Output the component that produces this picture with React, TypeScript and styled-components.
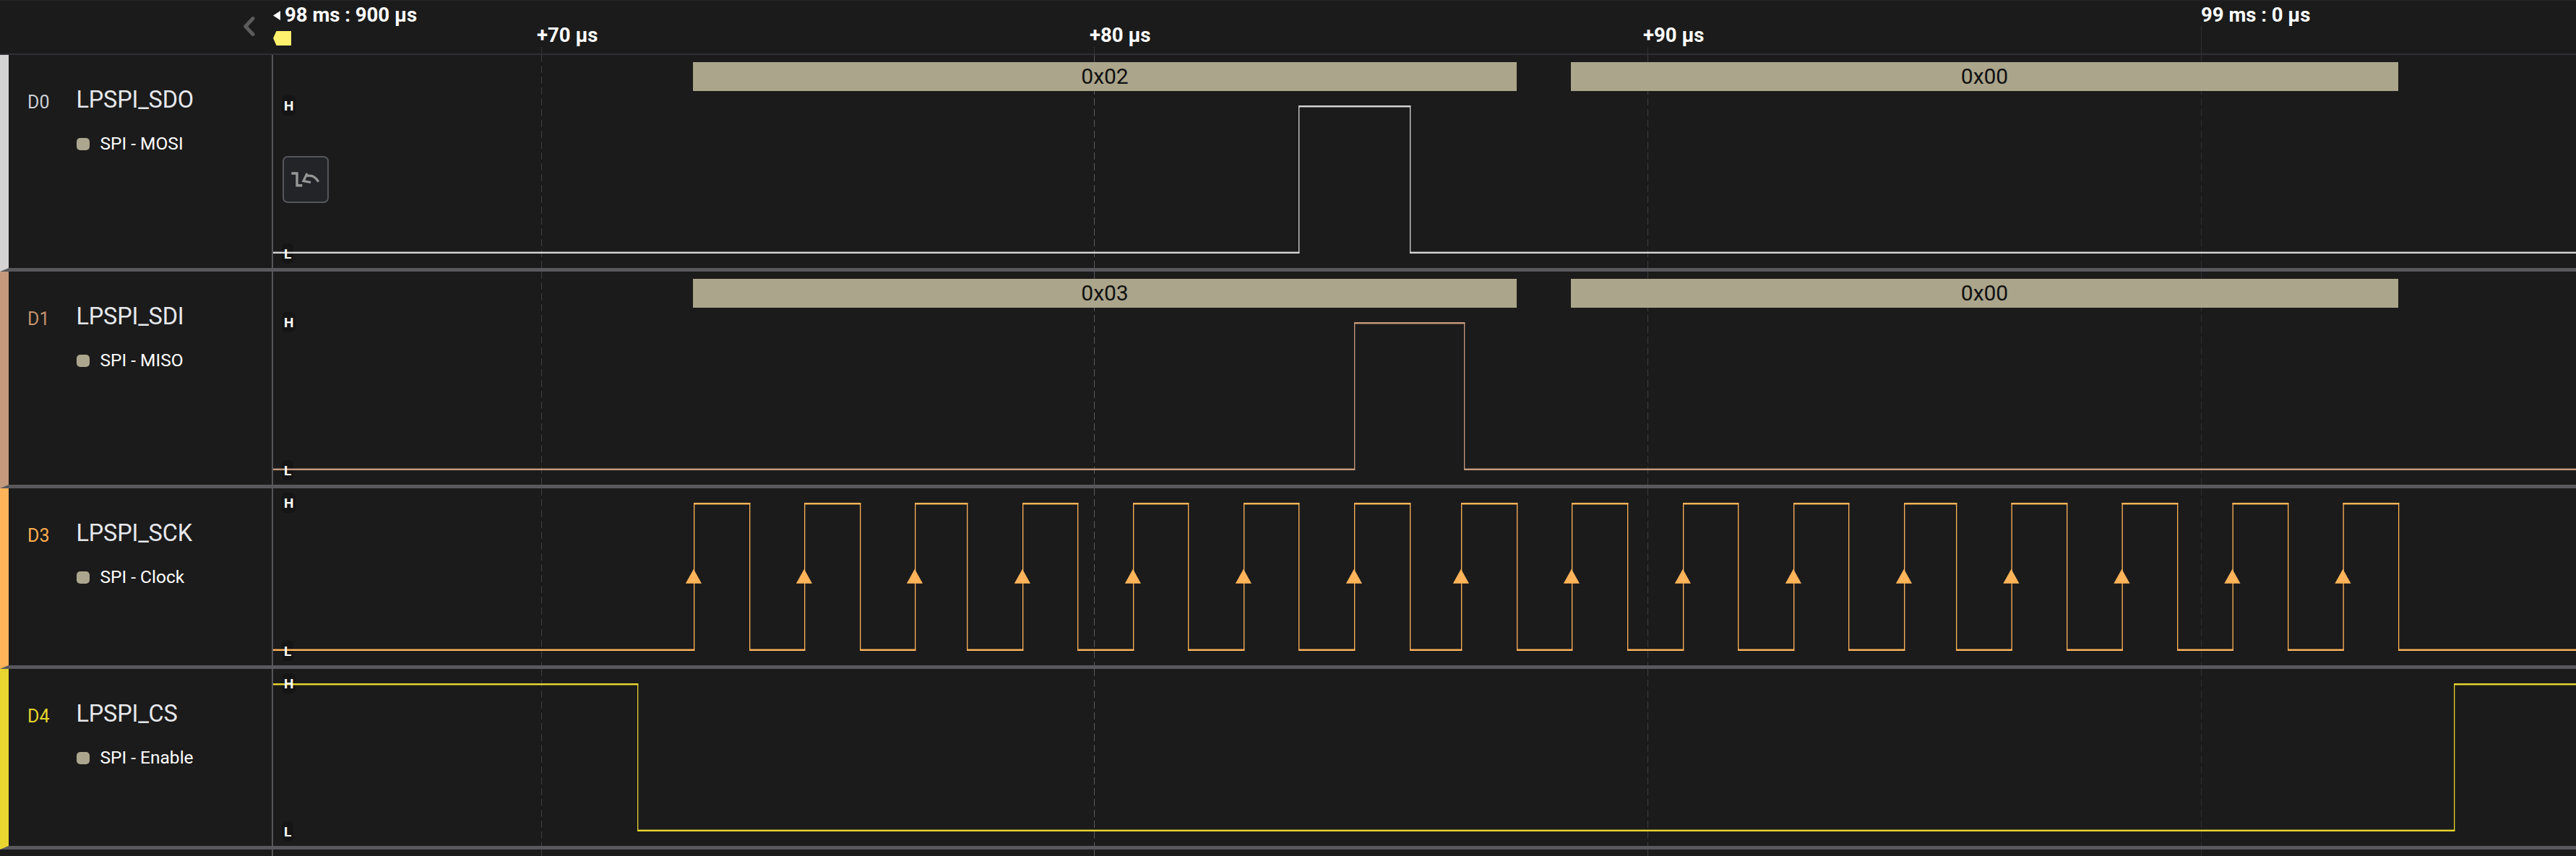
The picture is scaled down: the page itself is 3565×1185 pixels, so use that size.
import styled, { createGlobalStyle } from 'styled-components';

const GlobalStyle = createGlobalStyle`
  html, body {
    margin: 0;
    padding: 0;
    background: #1b1b1b;
    font-family: 'Roboto', 'Liberation Sans', sans-serif;
  }
`;

const Page = styled.div`
  display: flex;
  flex-direction: column;
  width: 3565px;
  height: 1185px;
  overflow: hidden;
  background: #1b1b1b;
`;

const Header = styled.header`
  display: flex;
  flex: 0 0 76px;
  box-sizing: border-box;
  border-top: 1px solid #252527;
  border-bottom: 2px solid #2f2f34;
`;

const HeaderSide = styled.div`
  display: flex;
  flex: 0 0 378px;
  justify-content: flex-end;
  align-items: flex-start;
  padding: 22px 25px 0 0;
  box-sizing: border-box;
`;

const Ruler = styled.div`
  position: relative;
  flex: 1;
`;

const RulerLabel = styled.span<{ $row: number }>`
  position: absolute;
  top: ${p => (p.$row === 0 ? 4 : 32)}px;
  color: #fff;
  font-size: 27.5px;
  font-weight: 700;
  line-height: 32px;
  white-space: nowrap;
`;

const RulerTick = styled.i<{ $row: number }>`
  position: absolute;
  top: ${p => (p.$row === 0 ? 35 : 64)}px;
  bottom: 0;
  width: 1px;
  background: #303034;
`;

const Marker = styled.svg`
  position: absolute;
  top: 0;
  left: 0;
`;

const Channel = styled.section<{ $height: number; $color: string }>`
  display: flex;
  flex: 0 0 ${p => p.$height}px;
  box-sizing: border-box;
  border-left: 12px solid ${p => p.$color};
  border-bottom: 5px solid #58585d;
`;

const ChannelInfo = styled.div`
  display: flex;
  flex: 0 0 366px;
  box-sizing: border-box;
  padding: 43px 0 0 26px;
  border-right: 2px solid #55565a;
`;

const ChannelTag = styled.span<{ $color: string }>`
  flex: 0 0 67.5px;
  margin-top: 8px;
  color: ${p => p.$color};
  font-size: 25px;
  font-weight: 400;
  line-height: 30px;
`;

const ChannelText = styled.div`
  display: flex;
  flex-direction: column;
  gap: 27px;
`;

const ChannelName = styled.span`
  color: #e6e8ec;
  font-size: 32.5px;
  font-weight: 400;
  line-height: 38px;
  letter-spacing: -0.2px;
`;

const Analyzer = styled.div`
  display: flex;
  align-items: center;
  gap: 15px;
  color: #fff;
  font-size: 24.5px;
  line-height: 30px;
`;

const AnalyzerDot = styled.i`
  width: 18px;
  height: 17px;
  border-radius: 5px;
  background: #aca68e;
`;

const Wave = styled.div`
  position: relative;
  flex: 1;
  isolation: isolate;
`;

const WaveDrawing = styled.svg`
  position: absolute;
  top: 0;
  left: 0;
  z-index: 1;
`;

const LevelLabel = styled.span<{ $top: number }>`
  position: absolute;
  top: ${p => p.$top}px;
  left: 12px;
  height: 28px;
  padding: 0 3px;
  color: #fff;
  font-size: 19px;
  font-weight: 700;
  line-height: 30px;

  &::before {
    content: '';
    position: absolute;
    inset: 0;
    z-index: 0;
    border-radius: 6px;
    background: #151516;
  }

  b {
    position: relative;
    z-index: 2;
    font-weight: inherit;
  }
`;

const DataFrame = styled.div`
  position: absolute;
  top: 10px;
  z-index: 3;
  height: 40px;
  background: #aba58b;
  color: #111;
  font-size: 30px;
  font-weight: 400;
  line-height: 40px;
  text-align: center;
`;

const ToolButton = styled.button`
  position: absolute;
  top: 140px;
  left: 13px;
  z-index: 3;
  width: 64px;
  height: 65px;
  padding: 0;
  box-sizing: border-box;
  border: 2px solid #55565a;
  border-radius: 7px;
  background: #232427;
`;

const FooterStrip = styled.div`
  display: flex;
  flex: 1;
  position: relative;
`;

const FooterSide = styled.div`
  flex: 0 0 376px;
  border-right: 2px solid #55565a;
`;

const WAVE_LEFT = 378;
const WAVE_WIDTH = 3187;

const GRID = [
  { x: 749, color: '#3f3f43' },
  { x: 1514, color: '#5a5a5f' },
  { x: 2280, color: '#3e3e42' },
  { x: 3046, color: '#2f2f32' },
];

const CLOCK_EDGES = [
  960.5, 1037.5, 1113.5, 1190.5, 1266.5, 1338.5, 1415.5, 1491.5, 1568.5, 1644.5, 1721.5, 1797.5,
  1874.5, 1951.5, 2022.5, 2099.5, 2175.5, 2252.5, 2329.5, 2405.5, 2482.5, 2558.5, 2635.5, 2707.5,
  2784, 2860.5, 2937, 3013.5, 3090, 3166.5, 3243, 3319.5,
];

interface ChannelData {
  tag: string;
  name: string;
  analyzer: string;
  color: string;
  tagColor: string;
  height: number;
  high: number;
  low: number;
  startHigh?: boolean;
  edges: number[];
  frames?: string[];
  arrows?: boolean;
  tool?: boolean;
}

const CHANNELS: ChannelData[] = [
  {
    tag: 'D0', name: 'LPSPI_SDO', analyzer: 'SPI - MOSI', color: '#d4d4d4', tagColor: '#cdd0d6',
    height: 300, high: 70, low: 272, edges: [1797.5, 1951.5], frames: ['0x02', '0x00'], tool: true,
  },
  {
    tag: 'D1', name: 'LPSPI_SDI', analyzer: 'SPI - MISO', color: '#c59a7c', tagColor: '#c4926e',
    height: 300, high: 70, low: 272, edges: [1874.5, 2026.5], frames: ['0x03', '0x00'],
  },
  {
    tag: 'D3', name: 'LPSPI_SCK', analyzer: 'SPI - Clock', color: '#ffb45a', tagColor: '#ffb04f',
    height: 250, high: 20, low: 222, edges: CLOCK_EDGES, arrows: true,
  },
  {
    tag: 'D4', name: 'LPSPI_CS', analyzer: 'SPI - Enable', color: '#e8d530', tagColor: '#e6d52e',
    height: 250, high: 20, low: 222, startHigh: true, edges: [882.5, 3396.5],
  },
];

const FRAME_SPANS = [
  { left: 959, right: 2099 },
  { left: 2174, right: 3319 },
];

function GridLines({ height }: { height: number }) {
  return (
    <>
      {GRID.map(line => (
        <line
          key={line.x}
          x1={line.x + 0.5}
          x2={line.x + 0.5}
          y1={0}
          y2={height}
          stroke={line.color}
          strokeWidth={1}
          strokeDasharray="10 5"
        />
      ))}
    </>
  );
}

function Trace({ channel }: { channel: ChannelData }) {
  const { color, high, low, edges, startHigh } = channel;
  const points = [WAVE_LEFT, ...edges, WAVE_LEFT + WAVE_WIDTH];

  return (
    <>
      {points.slice(0, -1).map((x, i) => {
        const isHigh = Boolean(startHigh) === (i % 2 === 0);
        const left = i === 0 ? x : x - 0.5;
        const width = points[i + 1] - left + 0.8;
        return (
          <g key={x} fill={color}>
            <rect x={left} y={isHigh ? high : low + 1} width={width} height={2} />
            <rect x={left} y={isHigh ? high + 2 : low} width={width} height={1} opacity={0.45} />
            {i > 0 && <rect x={left} y={high} width={1.3} height={low - high + 3} />}
          </g>
        );
      })}
      {channel.arrows &&
        edges
          .filter((_, i) => i % 2 === 0)
          .map(x => (
            <polygon
              key={x}
              points={`${x - 0.6},111.7 ${x + 10.5},131.7 ${x - 11.7},131.7`}
              fill={color}
            />
          ))}
    </>
  );
}

function ToolIcon() {
  return (
    <svg width="60" height="61" viewBox="2 2 60 61" fill="none" stroke="#969696" strokeWidth="3.4">
      <path d="M12.3 24H20V40.7H27.3" />
      <path d="M49.7 35.7Q44 25 33 27.5" strokeWidth="3.2" />
      <path d="M34 24L29 34.5L39 36.5" strokeWidth="3.2" />
    </svg>
  );
}

export default function App() {
  return (
    <Page>
      <GlobalStyle />
      <Header>
        <HeaderSide>
          <svg width="16" height="27" viewBox="0 0 16 27" fill="none">
            <path d="M13 2.5L2.8 13.5L13 24.5" stroke="#5c5c5c" strokeWidth="5" strokeLinecap="round" strokeLinejoin="round" />
          </svg>
        </HeaderSide>
        <Ruler>
          <Marker width="30" height="70" viewBox="0 0 30 70">
            <polygon points="0,20.5 10,14 10,27" fill="#fff" />
            <polygon points="0,51.7 4.5,42 25,42 25,62 4.5,62" fill="#fff06e" />
          </Marker>
          <RulerLabel $row={0} style={{ left: 394 - WAVE_LEFT }}>98 ms : 900 µs</RulerLabel>
          <RulerLabel $row={1} style={{ left: 743 - WAVE_LEFT }}>+70 µs</RulerLabel>
          <RulerLabel $row={1} style={{ left: 1508 - WAVE_LEFT }}>+80 µs</RulerLabel>
          <RulerLabel $row={1} style={{ left: 2274 - WAVE_LEFT }}>+90 µs</RulerLabel>
          <RulerLabel $row={0} style={{ left: 3046 - WAVE_LEFT }}>99 ms : 0 µs</RulerLabel>
          {GRID.map((line, i) => (
            <RulerTick key={line.x} $row={i === 3 ? 0 : 1} style={{ left: line.x - WAVE_LEFT }} />
          ))}
        </Ruler>
      </Header>

      {CHANNELS.map(channel => {
        const waveHeight = channel.height - 5;
        return (
          <Channel key={channel.tag} $height={channel.height} $color={channel.color}>
            <ChannelInfo>
              <ChannelTag $color={channel.tagColor}>{channel.tag}</ChannelTag>
              <ChannelText>
                <ChannelName>{channel.name}</ChannelName>
                <Analyzer>
                  <AnalyzerDot />
                  {channel.analyzer}
                </Analyzer>
              </ChannelText>
            </ChannelInfo>
            <Wave>
              <LevelLabel $top={channel.high - 14}><b>H</b></LevelLabel>
              <LevelLabel $top={channel.low - 11}><b>L</b></LevelLabel>
              <WaveDrawing
                width={WAVE_WIDTH}
                height={waveHeight}
                viewBox={`${WAVE_LEFT} 0 ${WAVE_WIDTH} ${waveHeight}`}
              >
                <GridLines height={waveHeight} />
                <Trace channel={channel} />
              </WaveDrawing>
              {channel.frames?.map((frame, i) => (
                <DataFrame
                  key={i}
                  style={{
                    left: FRAME_SPANS[i].left - WAVE_LEFT,
                    width: FRAME_SPANS[i].right - FRAME_SPANS[i].left,
                  }}
                >
                  {frame}
                </DataFrame>
              ))}
              {channel.tool && (
                <ToolButton>
                  <ToolIcon />
                </ToolButton>
              )}
            </Wave>
          </Channel>
        );
      })}

      <FooterStrip>
        <FooterSide />
        <Wave>
          <WaveDrawing width={WAVE_WIDTH} height={9} viewBox={`${WAVE_LEFT} 0 ${WAVE_WIDTH} 9`}>
            <GridLines height={9} />
          </WaveDrawing>
        </Wave>
      </FooterStrip>
    </Page>
  );
}
